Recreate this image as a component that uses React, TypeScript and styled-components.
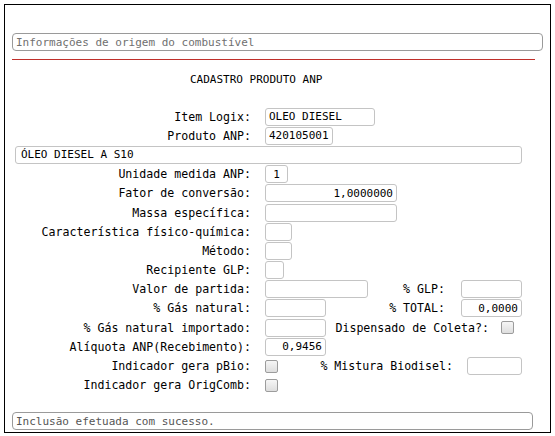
import React from "react";
import styled, { createGlobalStyle } from "styled-components";

const Global = createGlobalStyle`
  html, body { margin: 0; padding: 0; background: #fff; }
  body { font-family: "DejaVu Sans Mono", "Liberation Mono", monospace; color: #000; }
`;

const Frame = styled.div`
  box-sizing: border-box;
  margin: 4px 0 0 4px;
  width: 547px;
  height: 429px;
  border: 1px solid #000;
  display: flex;
  flex-direction: column;
`;

const BaseInput = styled.input`
  box-sizing: border-box;
  font-family: "DejaVu Sans Mono", "Liberation Mono", monospace;
  font-size: 11px;
  color: #000;
  background: #fff;
  border: 1px solid #c4c4c4;
  border-radius: 3px;
  padding: 0 3px;
  margin: 0;
  outline: none;
  &::placeholder { color: #6f6f6f; }
`;

const BarInput = styled(BaseInput)<{ $w: number; $top: number }>`
  width: ${(p) => p.$w}px;
  height: 18px;
  margin: ${(p) => p.$top}px 0 0 7px;
  border-color: #9a9a9a;
  border-radius: 4px;
  font-size: 11px;
  color: #555;
`;

const Divider = styled.div`
  align-self: flex-start;
  flex: none;
  margin: 8px 0 0 7px;
  width: 523px;
  height: 1px;
  background: #c0302c;
`;

const Title = styled.div`
  margin-top: 13px;
  padding-left: 185px;
  font-size: 11px;
  line-height: 14px;
`;

const Form = styled.div`
  margin-top: 20px;
  display: flex;
  flex-direction: column;
`;

const Row = styled.div`
  display: flex;
  align-items: center;
  height: 19.2px;
  padding-right: 28px;
`;

const Label = styled.span`
  width: 246px;
  flex: none;
  text-align: right;
  font-size: 11.6px;
  white-space: nowrap;
`;

const Field = styled(BaseInput)<{ $w: number; $align?: string }>`
  width: ${(p) => p.$w}px;
  height: 18px;
  flex: none;
  text-align: ${(p) => p.$align || "left"};
`;

const Lead = styled.div`
  margin-left: 14px;
  display: flex;
  align-items: center;
`;

const WideField = styled(BaseInput)`
  width: 514px;
  height: 18px;
  margin-left: 10px;
  padding-left: 5px;
`;

const Right = styled.div<{ $gap: number; $pr?: number }>`
  margin-left: auto;
  display: flex;
  align-items: center;
  gap: ${(p) => p.$gap}px;
  padding-right: ${(p) => p.$pr || 0}px;
`;

const SubLabel = styled.span`
  font-size: 11.6px;
  white-space: nowrap;
`;

const Check = styled.input.attrs({ type: "checkbox" })`
  appearance: none;
  -webkit-appearance: none;
  box-sizing: border-box;
  width: 13px;
  height: 13px;
  margin: 0;
  border: 1px solid #9c9c9c;
  border-radius: 2px;
  background: linear-gradient(#f6f6f6, #dedede);
`;

const StatusInput = styled(BaseInput)`
  width: 521px;
  height: 18px;
  margin: auto 0 2px 7px;
  border-color: #9a9a9a;
  border-radius: 4px;
  color: #555;
`;

type F = { label: string; w: number; v?: string; align?: string };

const simple: F[] = [
  { label: "Unidade medida ANP:", w: 23, v: "1", align: "center" },
  { label: "Fator de conversão:", w: 132, v: "1,0000000", align: "right" },
  { label: "Massa específica:", w: 132 },
  { label: "Característica físico-química:", w: 27 },
  { label: "Método:", w: 27 },
  { label: "Recipiente GLP:", w: 19 },
];

export default function App() {
  return (
    <>
      <Global />
      <Frame>
        <BarInput $w={531} $top={28} readOnly placeholder="Informações de origem do combustível" />
        <Divider />
        <Title>CADASTRO PRODUTO ANP</Title>
        <Form>
          <Row>
            <Label>Item Logix:</Label>
            <Lead><Field $w={110} readOnly value="OLEO DIESEL" /></Lead>
          </Row>
          <Row>
            <Label>Produto ANP:</Label>
            <Lead><Field $w={68} readOnly value="420105001" /></Lead>
          </Row>
          <Row>
            <WideField readOnly value="ÓLEO DIESEL A S10" />
          </Row>
          {simple.map((f) => (
            <Row key={f.label}>
              <Label>{f.label}</Label>
              <Lead><Field $w={f.w} $align={f.align} readOnly value={f.v || ""} /></Lead>
            </Row>
          ))}
          <Row>
            <Label>Valor de partida:</Label>
            <Lead><Field $w={103} readOnly value="" /></Lead>
            <Right $gap={16}>
              <SubLabel>% GLP:</SubLabel>
              <Field $w={61} readOnly value="" />
            </Right>
          </Row>
          <Row>
            <Label>% Gás natural:</Label>
            <Lead><Field $w={61} readOnly value="" /></Lead>
            <Right $gap={16}>
              <SubLabel>% TOTAL:</SubLabel>
              <Field $w={61} $align="right" readOnly value="0,0000" />
            </Right>
          </Row>
          <Row>
            <Label>% Gás natural importado:</Label>
            <Lead><Field $w={61} readOnly value="" /></Lead>
            <Right $gap={12} $pr={8}>
              <SubLabel>Dispensado de Coleta?:</SubLabel>
              <Check readOnly />
            </Right>
          </Row>
          <Row>
            <Label>Alíquota ANP(Recebimento):</Label>
            <Lead><Field $w={61} $align="right" readOnly value="0,9456" /></Lead>
          </Row>
          <Row>
            <Label>Indicador gera pBio:</Label>
            <Lead><Check readOnly /></Lead>
            <Right $gap={14}>
              <SubLabel>% Mistura Biodisel:</SubLabel>
              <Field $w={55} readOnly value="" />
            </Right>
          </Row>
          <Row>
            <Label>Indicador gera OrigComb:</Label>
            <Lead><Check readOnly /></Lead>
          </Row>
        </Form>
        <StatusInput readOnly value="Inclusão efetuada com sucesso." />
      </Frame>
    </>
  );
}
